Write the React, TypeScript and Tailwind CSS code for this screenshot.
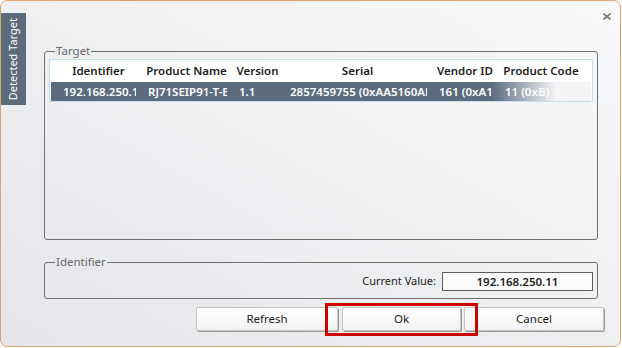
import React from "react";

type Col = { label: string; value: string; w: string };

const cols: Col[] = [
  { label: "Identifier", value: "192.168.250.11", w: "w-[85px]" },
  { label: "Product Name", value: "RJ71SEIP91-T-B", w: "w-[91px]" },
  { label: "Version", value: "1.1", w: "w-[51px]" },
  { label: "Serial", value: "2857459755 (0xAA5160AB)", w: "w-[149px]" },
  { label: "Vendor ID", value: "161 (0xA1)", w: "w-[66px]" },
  { label: "Product Code", value: "11 (0xB)", w: "w-[86px]" },
];

const Btn: React.FC<{ label: string; w: string }> = ({ label, w }) => (
  <button
    className={`${w} h-[24px] rounded-[2px] border border-[#c4c4c4] bg-linear-to-b from-white to-[#f3f3f3] shadow-[1px_1px_0_#9a9a9a] text-[11.5px] text-[#222]`}
  >
    {label}
  </button>
);

export default function App() {
  return (
    <div
      className="w-[621px] h-[347px] rounded-[7px] border border-[#dfa46b] bg-linear-to-bl from-[#f8f9fa] to-[#e4e6e9] flex overflow-hidden relative"
      style={{ fontFamily: '"Noto Sans", "Open Sans", sans-serif' }}
    >
      {/* side tab */}
      <div className="w-[25px] shrink-0 pt-[12px]">
        <div className="h-[92px] bg-[#5c6b7c] flex items-center justify-center">
          <span className="[writing-mode:vertical-rl] rotate-180 text-[11px] text-white whitespace-nowrap">
            Detected Target
          </span>
        </div>
      </div>

      <div className="flex-1 flex flex-col pl-[18px] pr-[9px]">
        <div className="h-[42px] flex justify-end items-start pt-[12px]">
          <svg width="8" height="7" viewBox="0 0 8 7" className="text-[#777]">
            <path d="M0.5 0.5 L7.5 6.5 M7.5 0.5 L0.5 6.5" stroke="currentColor" strokeWidth="1.6" />
          </svg>
        </div>

        {/* Target group */}
        <fieldset className="mr-[13px] h-[197px] rounded-[3px] border border-[#707070] px-[4px] pb-[6px] flex flex-col">
          <legend className="ml-[6px] px-[1px] text-[11.5px] leading-[16px] text-[#6a6a6a]">Target</legend>
          <div className="flex-1 border border-[#c5e1ef] bg-white px-[1px]">
            <div className="h-[22px] flex items-center pl-[5px]">
              {cols.map((c) => (
                <div key={c.label} className={`${c.w} shrink-0 text-center text-[11.5px] font-semibold text-[#1e1e1e] whitespace-nowrap`}>
                  {c.label}
                </div>
              ))}
            </div>
            <div className="h-[19px] bg-[#5c6c7e] flex items-center pl-[5px] relative">
              {cols.map((c) => (
                <div key={c.label} className={`${c.w} shrink-0 pl-[7px] pr-[5px] text-[11.5px] font-semibold text-white`}>
                  <div className="overflow-hidden whitespace-nowrap">{c.value}</div>
                </div>
              ))}
              <div className="absolute inset-y-0 left-[441px] right-0 bg-[linear-gradient(to_right,rgba(255,255,255,0),rgba(255,255,255,0.93)_64px)]" />
            </div>
          </div>
        </fieldset>

        {/* Identifier group */}
        <fieldset className="mt-[14px] mr-[13px] rounded-[3px] border border-[#707070] px-[4px] pb-[7px]">
          <legend className="ml-[6px] px-[1px] text-[11.5px] leading-[16px] text-[#6a6a6a]">Identifier</legend>
          <div className="mt-[2px] flex items-center justify-end gap-[6px]">
            <span className="text-[11px] text-[#222]">Current Value:</span>
            <div className="w-[151px] h-[19px] border border-[#5e5e5e] bg-[#fbfbfb] flex items-center justify-center text-[11.5px] font-semibold text-[#222]">
              192.168.250.11
            </div>
          </div>
        </fieldset>

        <div className="mt-[8px] mr-[7px] flex justify-end gap-[3px]">
          <Btn label="Refresh" w="w-[142px] mr-[1px]" />
          <Btn label="Ok" w="w-[119px]" />
          <Btn label="Cancel" w="w-[140px]" />
        </div>
      </div>

      {/* highlight annotation */}
      <div className="absolute left-[324px] top-[302px] w-[153px] h-[33px] border-[3px] border-[#cc0000] pointer-events-none" />
    </div>
  );
}
